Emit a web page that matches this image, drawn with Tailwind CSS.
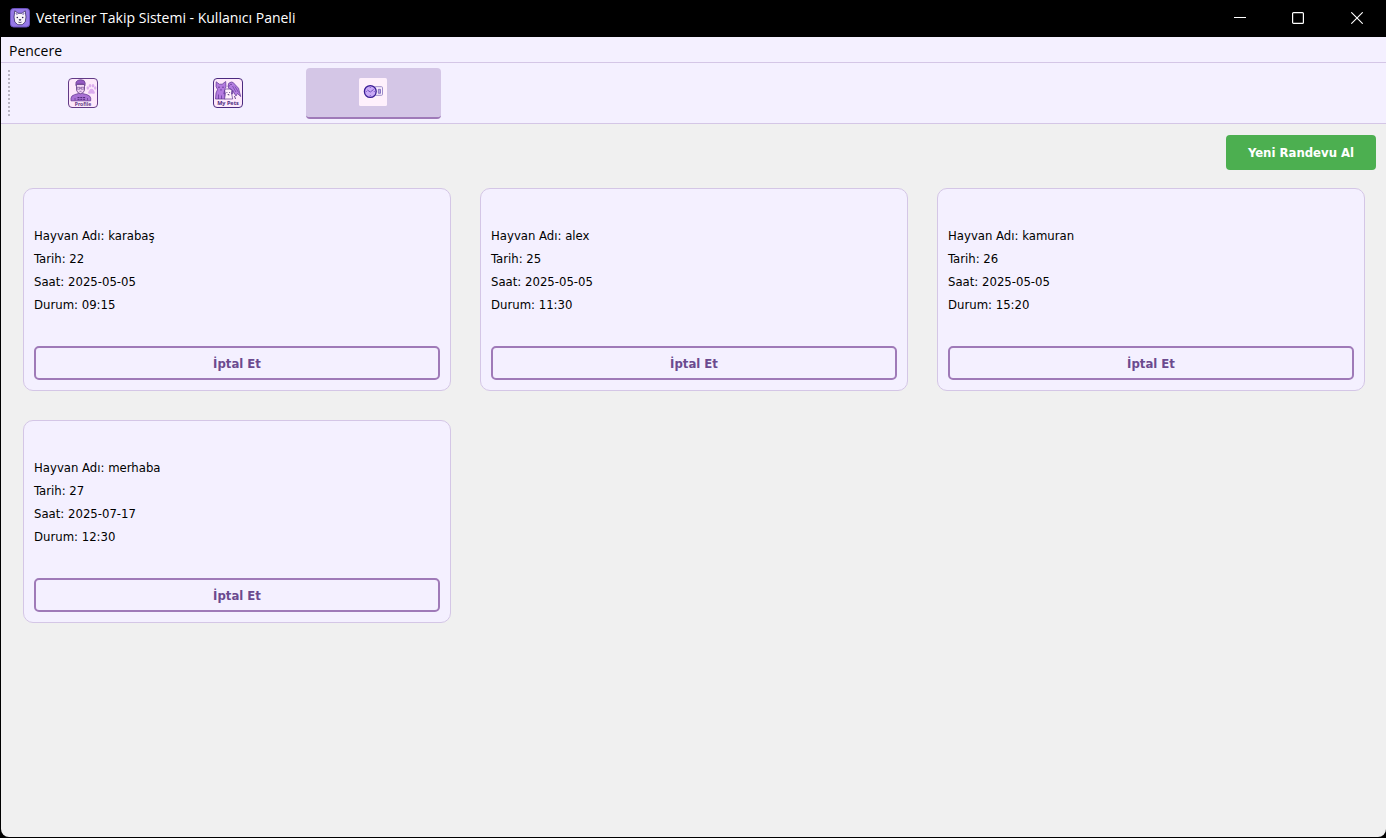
<!DOCTYPE html>
<html lang="tr">
<head>
<meta charset="utf-8">
<meta name="viewport" content="width=device-width, initial-scale=1">
<title>Veteriner Takip Sistemi - Kullanıcı Paneli</title>
<script src="https://cdn.jsdelivr.net/npm/@tailwindcss/browser@4"></script>
</head>
<body class="bg-black font-['Open_Sans','Noto_Sans',sans-serif] text-black">
<div class="flex min-h-screen flex-col pb-px pl-px">
  <header class="flex h-[37px] shrink-0 items-center bg-black pb-px pl-[9px] text-white">
    <svg class="size-5 shrink-0" viewBox="0 0 20 20" aria-hidden="true">
      <rect x=".5" y=".5" width="19" height="18.500" rx="3" fill="#9678e6" stroke="#6a50bc"/>
      <path d="M4.800 2.800 8 5.300h4l3.200-2.500.8 6.200-.8 5-3 2.700H7.800L4.800 14 4 9z" fill="#f6f2f8" stroke="#3a2c66" stroke-width=".8"/>
      <path d="M5.800 5 7.300 7M14.200 5 12.700 7" stroke="#7a5cc0"/>
      <circle cx="7.300" cy="9.500" r=".8" fill="#2e2350"/><circle cx="12.700" cy="9.500" r=".8" fill="#2e2350"/>
      <path d="M9 11.500h2l-1 1.300zM8.300 14q1.700 1 3.400 0" fill="#2e2350" stroke="#2e2350" stroke-width=".5"/>
    </svg>
    <h1 class="ml-1.5 flex-1 text-sm leading-5">Veteriner Takip Sistemi - Kullanıcı Paneli</h1>
    <button type="button" aria-label="Simge durumuna küçült" class="flex h-full w-[58px] items-center justify-center"><svg class="size-3" viewBox="0 0 12 12" fill="none" stroke="#fff"><path d="M0 5.500h12"/></svg></button>
    <button type="button" aria-label="Ekranı kapla" class="flex h-full w-[58px] items-center justify-center"><svg class="size-3" viewBox="0 0 12 12" fill="none" stroke="#fff" stroke-width="1.200"><rect x=".6" y=".6" width="10.800" height="10.800" rx="1"/></svg></button>
    <button type="button" aria-label="Kapat" class="flex h-full w-[59px] items-center justify-center"><svg class="size-3" viewBox="0 0 12 12" fill="none" stroke="#fff" stroke-width="1.100"><path d="m.3.3 11.400 11.400M11.700.3.300 11.700"/></svg></button>
  </header>

  <nav class="flex h-[26px] shrink-0 items-center border-b border-[#d4c6e6] bg-[#f4f0ff] pt-0.5 pl-2" aria-label="Menü">
    <button type="button" class="text-sm leading-5">Pencere</button>
  </nav>

  <div class="flex h-[61px] shrink-0 items-start border-b border-[#d4c6e6] bg-[#f4f0ff] pt-[5px] pl-[7px]" role="toolbar" aria-label="Araçlar">
    <svg class="mt-0.5 h-[47px] w-[2px] shrink-0" viewBox="0 0 2 47" aria-hidden="true"><path d="M1 0v47" stroke="#b9b5c4" stroke-width="2" stroke-dasharray="2 2"/></svg>
    <div class="ml-1.5 flex gap-2.5">
      <button type="button" aria-label="Profile" class="flex h-[51px] w-[135px] items-center justify-center rounded-sm pr-px pb-0.5">
        <svg class="size-[30px]" viewBox="0 0 30 30">
          <rect x=".5" y=".5" width="29" height="29" rx="3.500" fill="#fde8fb" stroke="#623a87"/>
          <g fill="#dcacee"><ellipse cx="19.800" cy="10" rx="1.300" ry="1.800"/><ellipse cx="22" cy="7.700" rx="1.300" ry="1.800"/><ellipse cx="25" cy="7.700" rx="1.300" ry="1.800"/><ellipse cx="27.200" cy="10" rx="1.200" ry="1.700"/><path d="M23.500 10.700c2 0 2.400 2.300 3.100 3 .8 1.100-.2 2.500-1.500 2.100q-1.600-.6-3.200 0c-1.400.4-2.300-1-1.500-2.100.7-.7 1.100-3 3.100-3z"/></g>
          <path d="M3 22.800v-2.600q.3-2.700 3.500-3.500l4-1.200h4l4.500 1.200q3.300.8 3.700 3.500v2.600z" fill="#a971d4" stroke="#6a3d95" stroke-width=".8"/>
          <path d="M8.500 6.500h8v5.500q-.5 3-4 3.800-3.500-.8-4-3.800z" fill="#f4d5f5" stroke="#623a87" stroke-width=".8"/>
          <path d="M7.800 7.500 8 4q1.600-2.300 4.500-2.300Q16.800 1.500 17.200 5l-.2 2.500-1.500-1.500H9.500z" fill="#9558c3" stroke="#623a87" stroke-width=".7"/>
          <path d="M8.800 9.300h3v1.900H9.200zM13.200 9.300h3l-.4 1.900h-2.600zM11.800 10h1.400M11.500 13.300h2" fill="none" stroke="#623a87" stroke-width=".6"/>
          <path d="M9.500 19.500h8M9.500 21.300h8" stroke="#542c7e" stroke-dasharray="2 .8"/><path d="M7 20v2.500M19.500 20v2.500" stroke="#6a3d95" stroke-width=".8"/>
          <text x="15" y="27.800" text-anchor="middle" font-family="Noto Sans" font-size="5" font-weight="700" fill="#623a87">Profile</text>
        </svg>
      </button>
      <button type="button" aria-label="My Pets" class="flex h-[51px] w-[135px] items-center justify-center rounded-sm pr-px pb-0.5">
        <svg class="size-[30px]" viewBox="0 0 30 30">
          <rect x=".5" y=".5" width="29" height="29" rx="3.500" fill="#fde8fb" stroke="#4b2a7f"/>
          <path d="M2.500 21 3 15l1.500-3.500L3 8.500l.2-4.700 3.200 2.400h2.800l3.500-2.700.3 5.300-1.500 3.200.8 9z" fill="#b47be0" stroke="#5b3590" stroke-width=".7"/>
          <path d="M5.500 21v-4.500M8.500 21v-3.500M7 11.500l1 .8 1-.8" fill="none" stroke="#5b3590" stroke-width=".7"/>
          <circle cx="6" cy="9.200" r=".6" fill="#3c1d68"/><circle cx="10" cy="9.200" r=".6" fill="#3c1d68"/>
          <path d="M15 8.500q-.3-4 3.200-4.500 2.300 0 3.300 2l4 4.200 2.200 8.300-3.200-3-1.500 2.500-2.500-4q-3.500-1-4.500-3.500z" fill="#b47be0" stroke="#5b3590" stroke-width=".7"/>
          <path d="m19.500 8 3.500 6M22 8.500l3.500 6M17 10.500l4 3M15 8.500l2-1" stroke="#5b3590" stroke-width=".6"/><circle cx="18" cy="6.300" r=".6" fill="#3c1d68"/>
          <path d="m11.500 12.500 2-1.500h3.500l2.200 1.500-.5 3.700 1 4.800h-8.200l.8-4.300z" fill="#fff2fc" stroke="#5b3590" stroke-width=".7"/>
          <path d="m11.500 12.500-.8 3.300 1.600.2zM19 12.500l1 3.300-1.600.2z" fill="#8d55bd" stroke="#5b3590" stroke-width=".5"/>
          <path d="M13.900 14v.9M16.600 14v.9M14.700 16.500h1.200v.9M21.500 18l1 3" stroke="#3c1d68" stroke-width=".8" fill="none"/>
          <text x="15" y="27" text-anchor="middle" font-family="Noto Sans" font-size="5.500" font-weight="700" fill="#4b2a7f">My Pets</text>
        </svg>
      </button>
      <button type="button" aria-label="Randevular" aria-pressed="true" class="flex h-[51px] w-[135px] items-center justify-center rounded-sm border-b-2 border-[#9f7ab8] bg-[#d4c6e6] pr-px pb-px">
        <svg class="size-7" viewBox="0 0 28 28">
          <rect width="28" height="28" rx="1.500" fill="#fef0fc"/>
          <rect x="15.500" y="8.700" width="8" height="8.600" rx="1" fill="#fbf0ff" stroke="#9d8cc9"/>
          <path d="M19.300 11.300h2.200v4h-2.200z" fill="#b5a1df" stroke="#7460b4" stroke-width=".8"/>
          <circle cx="11.300" cy="13.500" r="5.900" fill="#c9a9f7" stroke="#3a1e94" stroke-width="1.300"/>
          <path d="m8.300 12 3 2 3.300-2.500" fill="none" stroke="#6b48b8" stroke-width=".9"/>
          <path d="M11.300 9v1M11.300 17v1M6.800 13.500h1M14.800 13.500h1" stroke="#6b48b8" stroke-width=".8"/>
        </svg>
      </button>
    </div>
  </div>

  <main class="flex flex-1 flex-col rounded-b-lg bg-[#f0f0f0] pt-[11px] pb-6 font-['DejaVu_Sans_Condensed','DejaVu_Sans',sans-serif] text-[13px]">
    <div class="flex justify-end pr-2.5">
      <button type="button" class="h-[35px] w-[150px] rounded-sm bg-[#4caf50] font-bold text-white">Yeni Randevu Al</button>
    </div>
    <div class="mt-[18px] grid grid-cols-3 gap-[29px] pr-[21px] pl-[22px]">
      <article class="rounded-[10px] border border-[#d4c6e6] bg-[#f4f0ff] px-2.5 pt-[35px] pb-2.5 leading-[23px]">
        <p>Hayvan Adı: karabaş</p><p>Tarih: 22</p><p>Saat: 2025-05-05</p><p>Durum: 09:15</p>
        <button type="button" class="mt-[30px] h-[34px] w-full rounded-[5px] border-2 border-[#9f7ab8] font-bold text-[#6b4a8f]">İptal Et</button>
      </article>
      <article class="rounded-[10px] border border-[#d4c6e6] bg-[#f4f0ff] px-2.5 pt-[35px] pb-2.5 leading-[23px]">
        <p>Hayvan Adı: alex</p><p>Tarih: 25</p><p>Saat: 2025-05-05</p><p>Durum: 11:30</p>
        <button type="button" class="mt-[30px] h-[34px] w-full rounded-[5px] border-2 border-[#9f7ab8] font-bold text-[#6b4a8f]">İptal Et</button>
      </article>
      <article class="rounded-[10px] border border-[#d4c6e6] bg-[#f4f0ff] px-2.5 pt-[35px] pb-2.5 leading-[23px]">
        <p>Hayvan Adı: kamuran</p><p>Tarih: 26</p><p>Saat: 2025-05-05</p><p>Durum: 15:20</p>
        <button type="button" class="mt-[30px] h-[34px] w-full rounded-[5px] border-2 border-[#9f7ab8] font-bold text-[#6b4a8f]">İptal Et</button>
      </article>
      <article class="rounded-[10px] border border-[#d4c6e6] bg-[#f4f0ff] px-2.5 pt-[35px] pb-2.5 leading-[23px]">
        <p>Hayvan Adı: merhaba</p><p>Tarih: 27</p><p>Saat: 2025-07-17</p><p>Durum: 12:30</p>
        <button type="button" class="mt-[30px] h-[34px] w-full rounded-[5px] border-2 border-[#9f7ab8] font-bold text-[#6b4a8f]">İptal Et</button>
      </article>
    </div>
  </main>
</div>
</body>
</html>
